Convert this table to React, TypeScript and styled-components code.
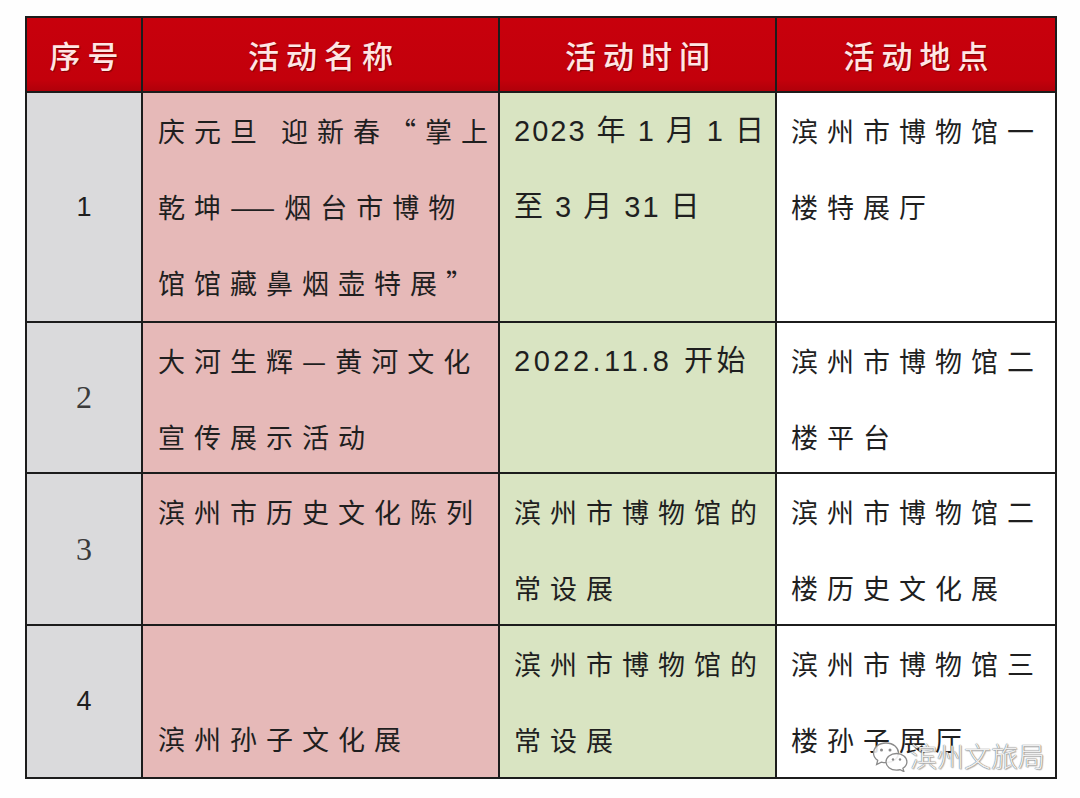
import React from "react";
import styled, { createGlobalStyle } from "styled-components";

const Global = createGlobalStyle`
  html, body { margin: 0; padding: 0; background: #ffffff; }
  body { font-family: "Noto Sans CJK SC", "Liberation Sans", sans-serif; }
`;

const Page = styled.div`
  position: relative;
  width: 1080px;
  height: 798px;
  background: #fefefe;
  overflow: hidden;
  padding: 16px 0 0 25px;
  box-sizing: border-box;
`;

const Table = styled.div`
  display: grid;
  grid-template-columns: 114px 355px 275px 278px;
  grid-template-rows: 73px 228px 149px 150px 151px;
  gap: 2px;
  padding: 2px;
  width: fit-content;
  background: #1c1c1c;
`;

const HeaderCell = styled.div`
  background: linear-gradient(#c8000c 0%, #c3000b 85%, #b0000a 100%);
  color: #ffe6e4;
  display: flex;
  align-items: center;
  justify-content: center;
  font-family: "Noto Sans CJK SC", sans-serif;
  font-size: 31px;
  font-weight: 500;
  letter-spacing: 7px;
  padding-left: 7px;
  text-shadow: 1px 1px 1px rgba(90, 0, 0, 0.7);
`;

type Tone = "grey" | "pink" | "green" | "white";

const toneColor: Record<Tone, string> = {
  grey: "#dadadc",
  pink: "#e6b9b8",
  green: "#d9e4c2",
  white: "#ffffff",
};

const NumCell = styled.div<{ $serif?: boolean }>`
  background: ${toneColor.grey};
  display: flex;
  align-items: center;
  justify-content: center;
  color: ${(p) => (p.$serif ? "#3a3a3a" : "#1e1e1e")};
  font-family: ${(p) =>
    p.$serif ? `"Liberation Serif", serif` : `"Liberation Sans", sans-serif`};
  font-size: ${(p) => (p.$serif ? "32px" : "27px")};
`;

const TextCell = styled.div<{ $tone: Tone; $pad: number }>`
  background: ${(p) => toneColor[p.$tone]};
  padding-left: ${(p) => p.$pad}px;
  display: flex;
  flex-direction: column;
`;

const Line = styled.div<{ $date?: boolean; $wide?: boolean }>`
  height: 76px;
  line-height: 76px;
  white-space: nowrap;
  color: #1f1f1f;
  font-family: ${(p) =>
    p.$date
      ? `"Liberation Sans", "Noto Sans CJK SC", sans-serif`
      : `"Noto Sans CJK SC", sans-serif`};
  font-size: ${(p) => (p.$date ? "29px" : "27px")};
  letter-spacing: ${(p) => (p.$wide ? "3.5px" : p.$date ? "2px" : "9px")};
`;

const Watermark = styled.div`
  position: absolute;
  left: 872px;
  top: 736px;
  display: flex;
  align-items: center;
  gap: 2px;
  pointer-events: none;
`;

const WatermarkText = styled.span`
  font-family: "Noto Sans CJK SC", sans-serif;
  font-size: 27px;
  font-weight: 300;
  color: rgba(255, 255, 255, 0.9);
  text-shadow: 0 0 1px #777, 0 0 1px #777, 1px 1px 1px rgba(0, 0, 0, 0.25);
`;

type LineSpec = { text: string; date?: boolean; wide?: boolean };

type Row = {
  num: string;
  serif?: boolean;
  name: LineSpec[];
  time: LineSpec[];
  place: LineSpec[];
};

const rows: Row[] = [
  {
    num: "1",
    name: [
      { text: "庆元旦 迎新春“掌上" },
      { text: "乾坤——烟台市博物" },
      { text: "馆馆藏鼻烟壶特展”" },
    ],
    time: [
      { text: "2023 年 1 月 1 日", date: true },
      { text: "至 3 月 31 日", date: true },
    ],
    place: [{ text: "滨州市博物馆一" }, { text: "楼特展厅" }],
  },
  {
    num: "2",
    serif: true,
    name: [{ text: "大河生辉—黄河文化" }, { text: "宣传展示活动" }],
    time: [{ text: "2022.11.8 开始", date: true, wide: true }],
    place: [{ text: "滨州市博物馆二" }, { text: "楼平台" }],
  },
  {
    num: "3",
    serif: true,
    name: [{ text: "滨州市历史文化陈列" }],
    time: [{ text: "滨州市博物馆的" }, { text: "常设展" }],
    place: [{ text: "滨州市博物馆二" }, { text: "楼历史文化展" }],
  },
  {
    num: "4",
    name: [{ text: "" }, { text: "滨州孙子文化展" }],
    time: [{ text: "滨州市博物馆的" }, { text: "常设展" }],
    place: [{ text: "滨州市博物馆三" }, { text: "楼孙子展厅" }],
  },
];

const headers = ["序号", "活动名称", "活动时间", "活动地点"];

const renderLines = (lines: LineSpec[]) =>
  lines.map((l, i) => (
    <Line key={i} $date={l.date} $wide={l.wide}>
      {l.text}
    </Line>
  ));

const WeChatIcon = () => (
  <svg width="36" height="32" viewBox="0 0 36 32">
    <g fill="rgba(255,255,255,0.85)" stroke="#8a8a8a" strokeWidth="1.3">
      <path d="M14 3 C6.5 3 1.5 7.6 1.5 13 c0 3 1.6 5.6 4.2 7.4 L4.6 24.5 l4.7-2.4 c1.5 .4 3 .6 4.7 .6 C21.5 22.7 26.5 18.2 26.5 13 S21.5 3 14 3 Z" />
      <path d="M24.5 13.5 c-6 0 -10.5 3.7 -10.5 8.3 s4.5 8.3 10.5 8.3 c1.3 0 2.5-.2 3.6-.5 l3.8 2 -1-3.3 c2.4-1.5 4-3.9 4-6.5 0-4.6-4.5-8.3-10.4-8.3 Z" />
    </g>
    <g fill="#8a8a8a">
      <circle cx="9.5" cy="10" r="1.5" />
      <circle cx="18" cy="10" r="1.5" />
      <circle cx="21" cy="19.5" r="1.2" />
      <circle cx="28" cy="19.5" r="1.2" />
    </g>
  </svg>
);

export default function App() {
  return (
    <Page>
      <Global />
      <Table>
        {headers.map((h) => (
          <HeaderCell key={h}>{h}</HeaderCell>
        ))}
        {rows.map((r) => (
          <React.Fragment key={r.num}>
            <NumCell $serif={r.serif}>{r.num}</NumCell>
            <TextCell $tone="pink" $pad={15}>
              {renderLines(r.name)}
            </TextCell>
            <TextCell $tone="green" $pad={14}>
              {renderLines(r.time)}
            </TextCell>
            <TextCell $tone="white" $pad={14}>
              {renderLines(r.place)}
            </TextCell>
          </React.Fragment>
        ))}
      </Table>
      <Watermark>
        <WeChatIcon />
        <WatermarkText>滨州文旅局</WatermarkText>
      </Watermark>
    </Page>
  );
}
